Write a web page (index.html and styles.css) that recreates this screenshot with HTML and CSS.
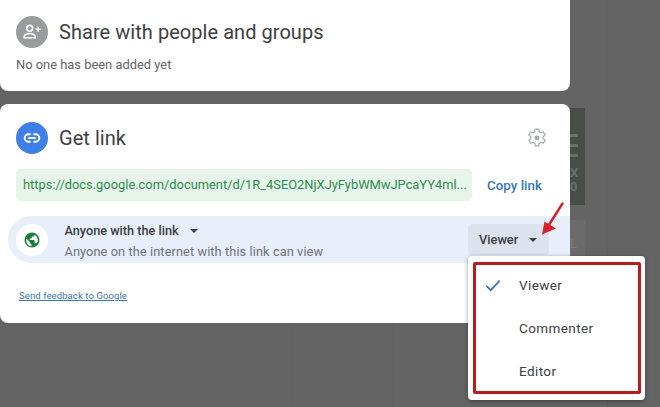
FILE: index.html
```html
<!DOCTYPE html>
<html lang="en">
<head>
<meta charset="utf-8">
<title>Share settings</title>
<link rel="stylesheet" href="styles.css">
</head>
<body>
<div class="backdrop">
  <div class="strip strip-dark"><i class="bar"></i><i class="bar"></i><i class="bar"></i><span class="glyph-x">X</span><span class="glyph-o">0</span></div>
  <div class="strip strip-light"><span>L</span></div>
  <div class="seam seam-a"></div>
  <div class="seam seam-b"></div>
  <div class="seam seam-c"></div>
</div>
<main class="dialog">
  <section class="card card-share">
    <div class="title-row">
      <span class="avatar avatar-grey">
        <svg viewBox="0 0 24 24" width="22" height="22"><circle cx="9.5" cy="8" r="3.2" fill="none" stroke="#fff" stroke-width="1.7"/><path d="M3.5 18.2v-1.4c0-2 4-3.2 6-3.2s6 1.200 6 3.200v1.400z" fill="none" stroke="#fff" stroke-width="1.700"/><path d="M16 9h5.500M18.750 6.250v5.500" stroke="#fff" stroke-width="1.700" fill="none"/></svg>
      </span>
      <h2 class="title">Share with people and groups</h2>
    </div>
    <p class="empty">No one has been added yet</p>
  </section>
  <section class="card card-link">
    <div class="title-row">
      <span class="avatar avatar-blue">
        <svg viewBox="0 0 24 24" width="22" height="22"><path d="M10.500 8H8a4 4 0 0 0 0 8h2.500M13.500 8H16a4 4 0 0 1 0 8h-2.500M8 12h8" fill="none" stroke="#fff" stroke-width="2.100"/></svg>
      </span>
      <h2 class="title">Get link</h2>
      <svg class="gear" viewBox="0 0 24 24" width="22" height="22"><path d="M10 2.500h4l.5 2.800 1.700 1 2.700-1 2 3.400-2.200 1.800v2l2.200 1.800-2 3.400-2.700-1-1.700 1-.5 2.800h-4l-.5-2.800-1.700-1-2.700 1-2-3.400 2.200-1.800v-2L3.100 8.700l2-3.400 2.700 1 1.700-1z" fill="none" stroke="#b0b2b5" stroke-width="1.500" stroke-linejoin="round"/><circle cx="12" cy="12" r="2.700" fill="#a9abae"/></svg>
    </div>
    <div class="link-row">
      <div class="url">https://docs.google.com/document/d/1R_4SEO2NjXJyFybWMwJPcaYY4ml...</div>
      <a class="copy">Copy link</a>
    </div>
    <div class="access-row">
      <span class="globe-wrap">
        <svg viewBox="0 0 24 24" width="18" height="18"><path fill="#1e7e3c" d="M12 2a10 10 0 1 0 0 20 10 10 0 0 0 0-20zM4.500 12c0-.6.100-1.200.200-1.700l4.800 4.800v1c0 1 .8 1.800 1.800 1.800v2.500A7.500 7.500 0 0 1 4.500 12zm13.600 4.700c-.2-.7-.9-1.200-1.700-1.200h-1v-2.700c0-.5-.4-.9-.9-.9H9v-1.800h1.800c.5 0 .9-.4.900-.9V7.400h1.800c1 0 1.800-.8 1.800-1.800v-.5a7.500 7.500 0 0 1 2.800 11.600z"/></svg>
      </span>
      <div class="access-text">
        <div class="access-title">Anyone with the link <span class="caret caret-title"></span></div>
        <div class="access-sub">Anyone on the internet with this link can view</div>
      </div>
      <div class="role-btn">Viewer <span class="caret caret-role"></span></div>
    </div>
    <a class="feedback">Send feedback to Google</a>
  </section>
</main>
<div class="menu">
  <div class="menu-frame">
    <div class="menu-item">
      <svg class="check" viewBox="0 0 18 14" width="16" height="13"><path d="M1.500 7.500l5 4.800L16.500 1.500" fill="none" stroke="#3a76b8" stroke-width="2"/></svg>
      <span>Viewer</span>
    </div>
    <div class="menu-item"><span>Commenter</span></div>
    <div class="menu-item"><span>Editor</span></div>
  </div>
</div>
<svg class="arrow" viewBox="0 0 30 40" width="30" height="40"><path d="M23.500 2.500L8 27" stroke="#d9202a" stroke-width="2.400" stroke-linecap="round" fill="none"/><path d="M3 33.500L5.500 20.500 17 27.500z" fill="#d9202a"/></svg>
</body>
</html>
```
FILE: styles.css
```css
* { box-sizing: border-box; }
html, body { margin: 0; padding: 0; }
body {
  width: 660px;
  height: 407px;
  overflow: hidden;
  background: #646464;
  font-family: Roboto, "Liberation Sans", sans-serif;
  position: relative;
}
.backdrop { position: absolute; inset: 0; }
.strip {
  position: absolute;
  left: 570px;
  width: 15px;
  color: #6b6f6b;
  font-size: 13px;
  line-height: 14px;
  display: flex;
  flex-direction: column;
  align-items: flex-start;
  overflow: hidden;
}
.strip-dark { top: 108px; height: 97px; background: #494d49; padding-top: 26px; font-weight: 700; }
.bar { display: block; width: 8px; height: 3px; background: #6b6f6b; margin-bottom: 7px; }
.glyph-x { margin-top: 2px; }
.glyph-o { margin-top: 0; }
.strip-light { top: 220px; height: 40px; background: #6b6b6b; padding-top: 17px; color: #7a7a7a; }
.seam { position: absolute; top: 0; bottom: 0; width: 1px; background: #616161; }
.seam-a { left: 607px; }
.seam-b { left: 292px; top: 323px; }
.seam-c { left: 392px; top: 323px; }
.dialog {
  position: relative;
  width: 570px;
  display: flex;
  flex-direction: column;
  gap: 13px;
}
.card { background: #fff; }
.card-share {
  height: 91px;
  border-radius: 0 0 8px 8px;
  padding: 16px 16px 0;
}
.card-link {
  height: 219px;
  border-radius: 8px;
  padding: 18px 0 0 16px;
}
.title-row { display: flex; align-items: center; gap: 11px; height: 32px; }
.avatar {
  width: 32px;
  height: 32px;
  border-radius: 50%;
  display: flex;
  align-items: center;
  justify-content: center;
  flex: none;
}
.avatar-grey { background: #9a9ca0; }
.avatar-blue { background: #3f7fe8; }
.title {
  margin: 0;
  font-size: 20px;
  font-weight: 400;
  color: #3c4043;
  letter-spacing: 0.05px;
}
.empty {
  margin: 9px 0 0;
  font-size: 12.900px;
  line-height: 16px;
  color: #5f6368;
}
.gear { margin-left: auto; margin-right: 22px; }
.link-row { display: flex; align-items: center; margin-top: 15px; }
.url {
  width: 456px;
  height: 32px;
  background: #e6f4ea;
  border-radius: 4px;
  padding-left: 7px;
  font-size: 12.880px;
  line-height: 31px;
  color: #2f8c50;
  white-space: nowrap;
}
.copy {
  margin-left: 15px;
  font-size: 13.400px;
  font-weight: 500;
  color: #3a76b8;
}
.access-row {
  display: flex;
  align-items: center;
  margin: 15px 0 0 -8px;
  height: 47px;
  background: #e8eefa;
  border-radius: 24px 0 0 24px;
  padding-left: 8px;
}
.globe-wrap {
  width: 32px;
  height: 32px;
  border-radius: 50%;
  background: #fff;
  display: flex;
  align-items: center;
  justify-content: center;
  flex: none;
}
.access-text { margin-left: 16.500px; flex: 1; padding-top: 4px; }
.access-title { font-size: 12.700px; font-weight: 500; line-height: 20px; color: #3c4043; }
.access-sub { font-size: 12.750px; line-height: 22px; color: #6f7378; letter-spacing: 0.1px; }
.caret {
  display: inline-block;
  width: 0;
  height: 0;
  border-left: 4px solid transparent;
  border-right: 4px solid transparent;
  border-top: 4px solid #3c4043;
  vertical-align: 2px;
}
.caret-title { margin-left: 8px; }
.caret-role { margin-left: 8px; }
.role-btn {
  width: 81px;
  height: 31px;
  margin-right: 21px;
  align-self: flex-start;
  margin-top: 8px;
  background: #dde3ee;
  border-radius: 4px;
  padding-left: 11px;
  font-size: 12.800px;
  font-weight: 500;
  line-height: 31px;
  color: #3c4043;
  white-space: nowrap;
}
.feedback {
  display: block;
  margin: 26px 0 0 3px;
  font-size: 9.500px;
  line-height: 14px;
  color: #3a76b8;
  text-decoration: underline;
  letter-spacing: 0.1px;
}
.menu {
  position: absolute;
  left: 468px;
  top: 256px;
  width: 177px;
  height: 144px;
  background: #fff;
  border-radius: 4px;
  box-shadow: 0 1px 4px rgba(0, 0, 0, 0.4);
  padding: 6px 4px 6px 5px;
}
.menu-frame {
  height: 100%;
  border: 3px solid #b71c20;
  border-radius: 2px;
  display: flex;
  flex-direction: column;
  justify-content: center;
}
.menu-item {
  position: relative;
  height: 43.500px;
  padding-left: 43px;
  font-size: 13.500px;
  line-height: 43px;
  color: #3c4043;
  letter-spacing: 0.4px;
}
.check { position: absolute; left: 9px; top: 15px; }
.arrow { position: absolute; left: 539px; top: 201px; }
```
